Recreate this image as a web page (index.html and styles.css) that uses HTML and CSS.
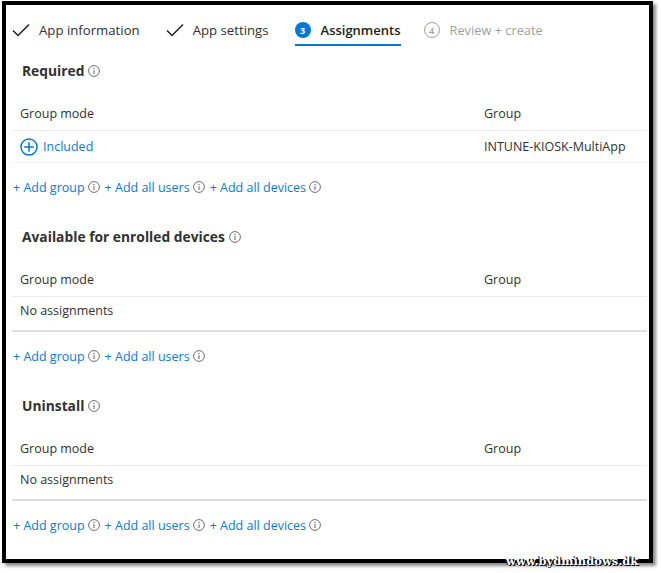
FILE: index.html
```html
<!DOCTYPE html>
<html>
<head>
<meta charset="utf-8">
<link rel="stylesheet" href="styles.css">
</head>
<body>
<div class="frame">
  <div class="tabs">
    <div class="tab done">
      <svg class="check" width="18" height="14" viewBox="0 0 18 14"><path d="M1 7.5 L6 12.5 L17 1.5" fill="none" stroke="#201f1e" stroke-width="1.5"/></svg>
      <span>App information</span>
    </div>
    <div class="tab done">
      <svg class="check" width="18" height="14" viewBox="0 0 18 14"><path d="M1 7.5 L6 12.5 L17 1.5" fill="none" stroke="#201f1e" stroke-width="1.5"/></svg>
      <span>App settings</span>
    </div>
    <div class="tab active">
      <span class="step on">3</span>
      <span>Assignments</span>
    </div>
    <div class="tab todo">
      <span class="step off">4</span>
      <span>Review + create</span>
    </div>
  </div>

  <section class="sec first">
    <h2 class="title">Required <svg class="info" width="12" height="12" viewBox="0 0 12 12"><circle cx="6" cy="6" r="5.4" fill="none" stroke="#605e5c" stroke-width="0.9"/><path d="M6 5.2 V9" stroke="#605e5c" stroke-width="1"/><circle cx="6" cy="3.5" r="0.65" fill="#605e5c"/></svg></h2>
    <div class="table">
      <div class="row head"><div class="c1">Group mode</div><div class="c2">Group</div></div>
      <div class="row data">
        <div class="c1 inc"><svg class="plus" width="18" height="18" viewBox="0 0 18 18"><circle cx="9" cy="9" r="8" fill="none" stroke="#0078d4" stroke-width="1.5"/><path d="M9 4.2 V13.8 M4.2 9 H13.8" stroke="#0078d4" stroke-width="1.5"/></svg><span class="link">Included</span></div>
        <div class="c2">INTUNE-KIOSK-MultiApp</div>
      </div>
    </div>
    <div class="links">
      <span class="link">+ Add group</span><svg class="info" width="12" height="12" viewBox="0 0 12 12"><circle cx="6" cy="6" r="5.4" fill="none" stroke="#605e5c" stroke-width="0.9"/><path d="M6 5.2 V9" stroke="#605e5c" stroke-width="1"/><circle cx="6" cy="3.5" r="0.65" fill="#605e5c"/></svg>
      <span class="link">+ Add all users</span><svg class="info" width="12" height="12" viewBox="0 0 12 12"><circle cx="6" cy="6" r="5.4" fill="none" stroke="#605e5c" stroke-width="0.9"/><path d="M6 5.2 V9" stroke="#605e5c" stroke-width="1"/><circle cx="6" cy="3.5" r="0.65" fill="#605e5c"/></svg>
      <span class="link">+ Add all devices</span><svg class="info" width="12" height="12" viewBox="0 0 12 12"><circle cx="6" cy="6" r="5.4" fill="none" stroke="#605e5c" stroke-width="0.9"/><path d="M6 5.2 V9" stroke="#605e5c" stroke-width="1"/><circle cx="6" cy="3.5" r="0.65" fill="#605e5c"/></svg>
    </div>
  </section>

  <section class="sec">
    <h2 class="title">Available for enrolled devices <svg class="info" width="12" height="12" viewBox="0 0 12 12"><circle cx="6" cy="6" r="5.4" fill="none" stroke="#605e5c" stroke-width="0.9"/><path d="M6 5.2 V9" stroke="#605e5c" stroke-width="1"/><circle cx="6" cy="3.5" r="0.65" fill="#605e5c"/></svg></h2>
    <div class="table">
      <div class="row head"><div class="c1">Group mode</div><div class="c2">Group</div></div>
      <div class="row empty"><div class="c1">No assignments</div></div>
    </div>
    <div class="links">
      <span class="link">+ Add group</span><svg class="info" width="12" height="12" viewBox="0 0 12 12"><circle cx="6" cy="6" r="5.4" fill="none" stroke="#605e5c" stroke-width="0.9"/><path d="M6 5.2 V9" stroke="#605e5c" stroke-width="1"/><circle cx="6" cy="3.5" r="0.65" fill="#605e5c"/></svg>
      <span class="link">+ Add all users</span><svg class="info" width="12" height="12" viewBox="0 0 12 12"><circle cx="6" cy="6" r="5.4" fill="none" stroke="#605e5c" stroke-width="0.9"/><path d="M6 5.2 V9" stroke="#605e5c" stroke-width="1"/><circle cx="6" cy="3.5" r="0.65" fill="#605e5c"/></svg>
    </div>
  </section>

  <section class="sec">
    <h2 class="title">Uninstall <svg class="info" width="12" height="12" viewBox="0 0 12 12"><circle cx="6" cy="6" r="5.4" fill="none" stroke="#605e5c" stroke-width="0.9"/><path d="M6 5.2 V9" stroke="#605e5c" stroke-width="1"/><circle cx="6" cy="3.5" r="0.65" fill="#605e5c"/></svg></h2>
    <div class="table">
      <div class="row head"><div class="c1">Group mode</div><div class="c2">Group</div></div>
      <div class="row empty"><div class="c1">No assignments</div></div>
    </div>
    <div class="links">
      <span class="link">+ Add group</span><svg class="info" width="12" height="12" viewBox="0 0 12 12"><circle cx="6" cy="6" r="5.4" fill="none" stroke="#605e5c" stroke-width="0.9"/><path d="M6 5.2 V9" stroke="#605e5c" stroke-width="1"/><circle cx="6" cy="3.5" r="0.65" fill="#605e5c"/></svg>
      <span class="link">+ Add all users</span><svg class="info" width="12" height="12" viewBox="0 0 12 12"><circle cx="6" cy="6" r="5.4" fill="none" stroke="#605e5c" stroke-width="0.9"/><path d="M6 5.2 V9" stroke="#605e5c" stroke-width="1"/><circle cx="6" cy="3.5" r="0.65" fill="#605e5c"/></svg>
      <span class="link">+ Add all devices</span><svg class="info" width="12" height="12" viewBox="0 0 12 12"><circle cx="6" cy="6" r="5.4" fill="none" stroke="#605e5c" stroke-width="0.9"/><path d="M6 5.2 V9" stroke="#605e5c" stroke-width="1"/><circle cx="6" cy="3.5" r="0.65" fill="#605e5c"/></svg>
    </div>
  </section>
</div>
<div class="watermark">www.bydmindows.dk</div>
</body>
</html>
```

FILE: styles.css
```css
html, body {
  margin: 0;
  padding: 0;
  background: #ffffff;
}
body {
  position: relative;
  width: 661px;
  height: 573px;
  overflow: hidden;
  font-family: "Open Sans", "Noto Sans", sans-serif;
  color: #323130;
}
.frame {
  margin: 1px 0 0 2px;
  width: 651px;
  height: 562px;
  box-sizing: border-box;
  border: 4px solid #000;
  box-shadow: 3px 3px 3px rgba(0, 0, 0, 0.45);
  padding: 0 2px 0 6px;
  background: #fff;
}
.tabs {
  display: flex;
  margin-top: 15px;
  height: 26px;
}
.tab {
  display: flex;
  align-items: center;
  height: 20px;
  padding-bottom: 4px;
  font-size: 13.2px;
  line-height: 20px;
  margin-right: 26px;
  white-space: nowrap;
}
.tab .check { margin-right: 9px; }
.tab.done span { color: #323130; }
.tab.active {
  border-bottom: 2px solid #0078d4;
  font-weight: 600;
  font-size: 13px;
  color: #201f1e;
  margin-right: 23px;
}
.tab.todo { color: #a19f9d; font-size: 12.8px; }
.step {
  display: inline-flex;
  align-items: center;
  justify-content: center;
  width: 16px;
  height: 16px;
  border-radius: 50%;
  box-sizing: border-box;
  font-size: 9px;
  font-weight: 700;
  line-height: 1;
  margin-right: 10px;
}
.step.on { background: #0078d4; color: #fff; }
.step.off { border: 1px solid #a19f9d; color: #a19f9d; font-weight: 600; }

.sec { margin-top: 30px; }
.sec.first { margin-top: 15px; }
.title {
  margin: 0 0 15px 0;
  padding-left: 10px;
  font-size: 13.8px;
  line-height: 20px;
  font-weight: 700;
  color: #323130;
  display: flex;
  align-items: center;
  gap: 4px;
}
.info { flex: none; }
.table {
  font-size: 12.5px;
}
.row {
  display: flex;
  box-sizing: border-box;
}
.row.head {
  height: 35px;
  align-items: center;
  border-bottom: 1px solid #edebe9;
  font-weight: 500;
  color: #323130;
}
.row.data {
  height: 32px;
  align-items: center;
  border-bottom: 1px solid #f3f2f1;
}
.row.empty {
  height: 35px;
  padding-top: 4px;
  line-height: 20px;
  border-bottom: 2px solid #e1dfdd;
  color: #323130;
}
.c1 { width: 464px; padding-left: 8px; box-sizing: border-box; }
.c2 { padding-left: 8px; }
.inc { display: flex; align-items: center; gap: 5px; }
.link { color: #0b7ad1; }
.links {
  margin-top: 14px;
  padding-left: 1px;
  height: 20px;
  display: flex;
  align-items: center;
  font-size: 12.5px;
  white-space: nowrap;
}
.links .info { margin: 0 5px 0 3px; }
.watermark {
  position: absolute;
  left: 506px;
  top: 554px;
  font-family: "DejaVu Serif", serif;
  font-weight: 700;
  font-size: 11.5px;
  color: #fff;
  text-shadow: 1px 1px 0 #000, -1px 0 0 #000;
}
```
